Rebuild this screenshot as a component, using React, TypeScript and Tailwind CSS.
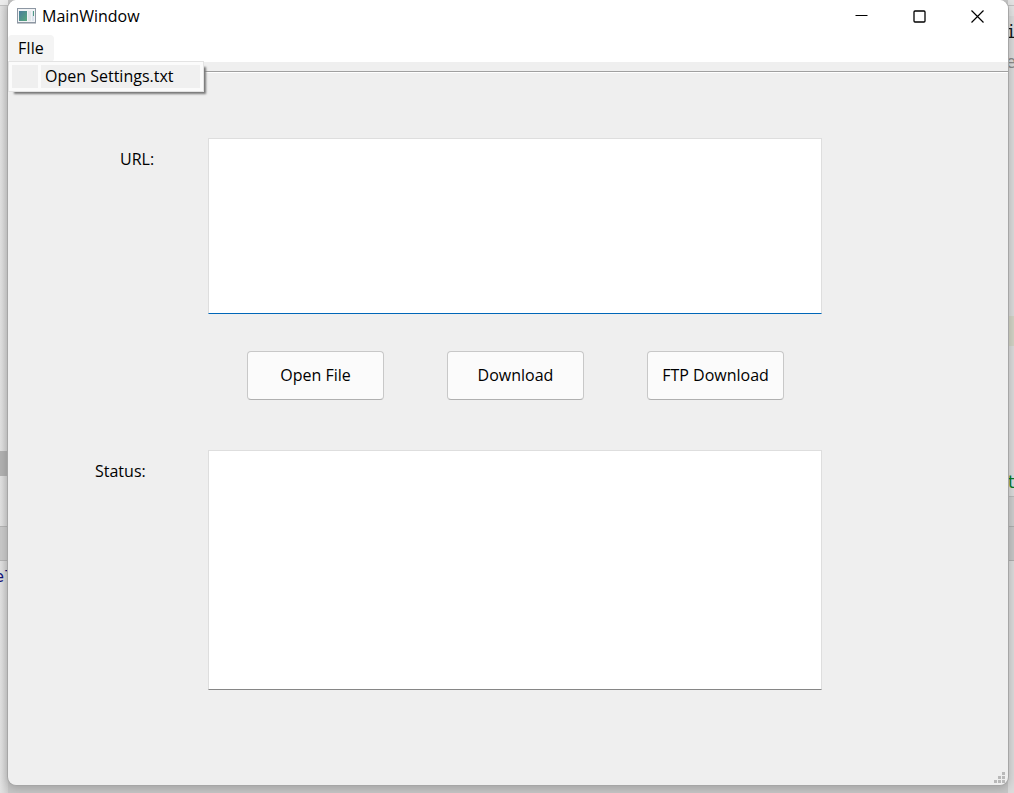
import React, { useState } from "react";

function LeftBackdrop() {
  return (
    <div className="flex w-2 flex-col overflow-hidden bg-linear-to-r from-[#e2e2e2] to-[#cfcfcf]">
      <div className="h-[5px] shrink-0 bg-[#ececec]" />
      <div className="h-px shrink-0 bg-[#c0c0c0]" />
      <div className="h-[445px] shrink-0" />
      <div className="h-[25px] shrink-0 bg-[#b1b1b1]" />
      <div className="h-[50px] shrink-0" />
      <div className="h-[35px] shrink-0 border-y border-[#b4b4b4] bg-[#c9c9c9]" />
      <div className="flex h-8 shrink-0 items-center justify-center font-['DejaVu_Sans_Mono',monospace] text-[16px] text-[#14147c]">
        <span>el</span>
      </div>
    </div>
  );
}

function RightBackdrop() {
  return (
    <div className="flex w-1.5 flex-col overflow-hidden bg-[#dadada] font-['DejaVu_Sans_Mono',monospace] text-[17px] leading-8">
      <div className="h-4 shrink-0 bg-[#e2e2e2] pt-[5px]">
        <div className="h-px bg-[#c0c0c0]" />
      </div>
      <div className="flex h-[30px] shrink-0 justify-center text-[#161616]">i</div>
      <div className="flex h-[30px] shrink-0 justify-center text-[#8a8a8a]">e</div>
      <div className="h-[240px] shrink-0" />
      <div className="h-[30px] shrink-0 bg-[#d2d3c5]" />
      <div className="h-[120px] shrink-0" />
      <div className="flex h-[30px] shrink-0 justify-center text-[#087a28]">t</div>
      <div className="h-[30px] shrink-0 border-t border-[#b9b9b9] bg-[#cdcdcd]" />
      <div className="h-[35px] shrink-0 border-y border-[#aeaeae] bg-[#c6c6c6]" />
    </div>
  );
}

function AppIcon() {
  return (
    <svg width="19" height="16" viewBox="0 0 19 16" aria-hidden="true">
      <defs>
        <linearGradient id="pane" x1="0" y1="0" x2="1" y2="1">
          <stop offset="0" stopColor="#4a7c9c" />
          <stop offset="1" stopColor="#57a87c" />
        </linearGradient>
      </defs>
      <rect x="0.5" y="0.5" width="18" height="14" fill="#f2f4f6" stroke="#8d97a3" />
      <path d="M0 15.5H19" stroke="#c3c7cc" />
      <rect x="2" y="3" width="8" height="10" fill="url(#pane)" />
      <rect x="11" y="3" width="3" height="10" fill="#e1e6ea" />
      <rect x="15" y="3" width="2" height="10" fill="#dce4ee" />
      <path d="M16.5 3V8" stroke="#4f9a86" />
    </svg>
  );
}

function TitleBar() {
  const control = "flex h-8 w-[58px] items-center justify-center hover:bg-[#e9e9e9]";
  return (
    <header className="flex h-[35px] items-start bg-white pr-0.5 pl-[9px]">
      <div className="flex h-8 flex-1 items-center gap-1.5">
        <AppIcon />
        <h1 className="text-[16px] leading-5">MainWindow</h1>
      </div>
      <button type="button" aria-label="Minimize" className={control}>
        <svg width="13" height="13" viewBox="0 0 13 13" fill="none" stroke="#000">
          <path d="M0.5 5.5H12.5" />
        </svg>
      </button>
      <button type="button" aria-label="Maximize" className={control}>
        <svg width="13" height="13" viewBox="0 0 13 13" fill="none" stroke="#000" strokeWidth="1.3">
          <rect x="1" y="1" width="11" height="11" rx="1" />
        </svg>
      </button>
      <button type="button" aria-label="Close" className={control}>
        <svg width="13" height="13" viewBox="0 0 13 13" fill="none" stroke="#000" strokeWidth="1.2">
          <path d="M0.5 0.5L12.5 12.5M12.5 0.5L0.5 12.5" />
        </svg>
      </button>
    </header>
  );
}

function MenuBar() {
  const [open, setOpen] = useState(true);
  return (
    <nav className="flex h-[27px] bg-white">
      <div className="relative">
        <button
          type="button"
          aria-expanded={open}
          onClick={() => setOpen(!open)}
          className="h-[27px] rounded-sm bg-[#f4f4f4] px-2.5 pb-0.5 text-[16px] leading-5"
        >
          FIle
        </button>
        {open && (
          <div
            role="menu"
            className="absolute top-[26px] left-0 z-10 flex h-[31px] w-[196px] gap-[3px] border border-[#e3e3e3] bg-[#fbfbfb] p-[3px] shadow-[4px_4px_2px_-2px_#777777]"
          >
            <div className="w-[26px] bg-[#efefef]" />
            <button
              type="button"
              role="menuitem"
              className="flex flex-1 items-center bg-[#f0f0f0] pb-0.5 pl-1 text-[16px] leading-5 whitespace-nowrap"
            >
              Open Settings.txt
            </button>
          </div>
        )}
      </div>
    </nav>
  );
}

function PushButton({ children }: { children: React.ReactNode }) {
  return (
    <button
      type="button"
      className="h-[49px] w-[137px] rounded border border-[#c8c8c8] border-b-[#b0b0b0] bg-[#fbfbfb] pb-0.5 text-[16px] leading-5 whitespace-nowrap hover:bg-[#f3f3f3]"
    >
      {children}
    </button>
  );
}

function SizeGrip() {
  return (
    <svg width="11" height="11" viewBox="0 0 11 11" fill="#b9b9b9" aria-hidden="true">
      <path d="M8 0h3v3H8zM4 4h3v3H4zM8 4h3v3H8zM0 8h3v3H0zM4 8h3v3H4zM8 8h3v3H8z" />
    </svg>
  );
}

export default function App() {
  return (
    <div className="relative flex min-h-screen bg-[#c6c6c6] font-['Open_Sans','Noto_Sans',sans-serif] text-black">
      <div className="absolute inset-0 flex justify-between" aria-hidden="true">
        <LeftBackdrop />
        <RightBackdrop />
      </div>
      <div className="relative mr-[5px] mb-[7px] ml-[7px] flex flex-1 flex-col overflow-hidden rounded-[9px] border-x border-b border-[#a6a6a6] bg-[#efefef] shadow-[0_2px_10px_rgba(0,0,0,0.2)]">
        <TitleBar />
        <MenuBar />
        <div className="h-[11px] border-b border-white">
          <div className="h-2.5 border-b border-[#a0a0a0]" />
        </div>
        <main className="grid flex-1 grid-cols-[200px_1fr_186px] content-start pt-[65px] text-[16px] leading-5">
          <label htmlFor="url" className="pt-[11px] pl-[112px]">
            URL:
          </label>
          <textarea
            id="url"
            className="block h-44 resize-none border border-[#dedede] border-b-[#0067b8] bg-white p-2 outline-none"
          />
          <div className="col-span-3 flex gap-[63px] py-[37px] pl-[239px]">
            <PushButton>Open File</PushButton>
            <PushButton>Download</PushButton>
            <PushButton>FTP Download</PushButton>
          </div>
          <label htmlFor="status" className="mt-[13px] pt-[11px] pl-[87px]">
            Status:
          </label>
          <textarea
            id="status"
            className="mt-[13px] block h-60 resize-none border border-[#dedede] border-b-[#868686] bg-white p-2 outline-none"
          />
        </main>
        <footer className="flex justify-end pr-[3px] pb-0.5">
          <SizeGrip />
        </footer>
      </div>
    </div>
  );
}
